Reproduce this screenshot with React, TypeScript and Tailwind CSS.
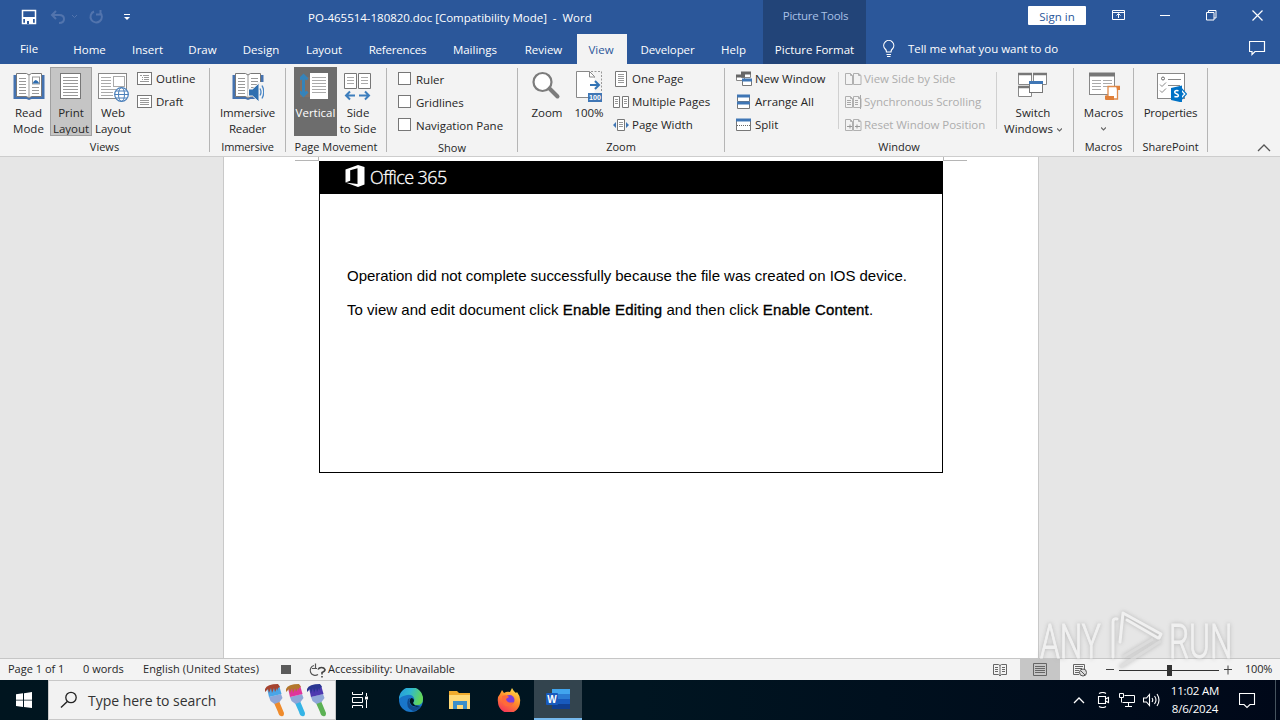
import type { ReactNode } from "react"
import clsx from "clsx"

const tabs = [
  { name: "File", size: "w-[58px] pb-0.5" },
  { name: "Home", size: "w-[63px]" },
  { name: "Insert", size: "w-[53px]" },
  { name: "Draw", size: "w-[57px]" },
  { name: "Design", size: "w-[60px]" },
  { name: "Layout", size: "w-[66px]" },
  { name: "References", size: "w-[81px] tracking-[-0.2px]" },
  { name: "Mailings", size: "w-[74px]" },
  { name: "Review", size: "w-[63px] mr-0.5" },
  { name: "View", size: "w-[50px] pr-0.5", active: true },
  { name: "Developer", size: "w-[81px] tracking-[-0.1px]" },
  { name: "Help", size: "w-[51px]" },
]

interface IconProps {
  w: number
  h: number
  className?: string
  children: ReactNode
}

function Icon({ w, h, className, children }: IconProps) {
  return (
    <svg width={w} height={h} viewBox={`0 0 ${w} ${h}`} fill="none" className={clsx("shrink-0", className)}>
      {children}
    </svg>
  )
}

function BookIcon({ reader }: { reader?: boolean }) {
  return (
    <Icon w={32} h={32}>
      <path d="M.5 5h31v24H18.500L16 30l-2.500-1H.5z" fill="#4472b0" />
      <path d="M3.500 3.500h10l2.500 1.500 2.500-1.500h10v23h-10L16 28l-2.500-1.500h-10z" fill="#fff" stroke="#777" />
      <path d="M16 5v23M6 8.500h7M6 11.500h7M6 14.500h7M6 17.500h7M6 20.500h7M6 23.500h7M19 17.500h7M19 20.500h7M19 23.500h7" stroke="#999" />
      {reader ? (
        <>
          <path d="M19 8.500h7M19 11.500h7M19 14.500h7" stroke="#999" />
          <path d="M25 12h7v20h-7z" fill="#f3f3f3" />
          <path d="M16.500 19h4l6.500-6v19l-6.500-6h-4z" fill="#2f6fb0" stroke="#f3f3f3" />
          <path d="M28 18.500q2 3.500 0 7M30 15.500q3.500 6.500 0 13" stroke="#4a86c5" strokeWidth="1.300" />
        </>
      ) : (
        <>
          <rect x="19.500" y="7" width="7" height="7" fill="#fff" stroke="#999" />
          <path d="M19.500 13.500q3-7 7 0z" fill="#2b6cb0" />
        </>
      )}
    </Icon>
  )
}

function PageIcon() {
  return (
    <Icon w={32} h={32}>
      <rect x="5.500" y="3.500" width="20" height="25" fill="#fff" stroke="#777" />
      <path d="M8 7.500h15M8 10.500h15M8 13.500h15M8 16.500h15M8 19.500h15M8 22.500h15M8 25.500h15" stroke="#999" />
    </Icon>
  )
}

function WebIcon() {
  return (
    <Icon w={32} h={32}>
      <rect x="1.500" y="3.500" width="28" height="25" fill="#fff" stroke="#888" />
      <path d="M4 7.500h10M4 10.500h10M4 13.500h10M4 16.500h10M4 19.500h15M4 22.500h12M4 25.500h12" stroke="#aaa" />
      <rect x="16.500" y="6.500" width="11" height="10" fill="#fff" stroke="#aaa" />
      <circle cx="24.500" cy="24.500" r="6.800" fill="#fff" stroke="#4a7fba" strokeWidth="1.200" />
      <ellipse cx="24.500" cy="24.500" rx="3" ry="6.800" stroke="#4a7fba" />
      <path d="M17.500 24.500h14M19 21h11M19 28h11" stroke="#4a7fba" />
    </Icon>
  )
}

function VerticalIcon() {
  return (
    <Icon w={32} h={32}>
      <path d="M-2 7h12v20H-2z" fill="#94735f" opacity=".5" />
      <path d="M3.500 5v20M-.5 9.500l4-4 4 4M-.5 21.500l4 4 4-4" stroke="#3583ba" strokeWidth="3" />
      <rect x="10" y="3" width="18" height="26" fill="#fff" />
      <path d="M12 7.500h14M12 10.500h14M12 13.500h14M12 16.500h14M12 19.500h14M12 22.500h14" stroke="#aaa" />
    </Icon>
  )
}

function SideIcon() {
  return (
    <Icon w={32} h={32}>
      <path d="M2.500 3.500h12v15h-12zM16.500 3.500h12v15h-12z" fill="#fff" stroke="#777" />
      <path d="M5 7.500h7M5 10.500h7M5 13.500h7M19 7.500h7M19 10.500h7M19 13.500h7" stroke="#aaa" />
      <path d="M4 25.500h9M8 21.500l-4 4 4 4M17 25.500h10M23 21.500l4 4-4 4" stroke="#3d7ebd" strokeWidth="2" />
    </Icon>
  )
}

function ZoomIcon() {
  return (
    <Icon w={32} h={32}>
      <circle cx="11.500" cy="12" r="9" fill="#fff" stroke="#7c7c7c" strokeWidth="2.200" />
      <path d="M18.500 18.500l8 8" stroke="#7c7c7c" strokeWidth="4" strokeLinecap="round" />
    </Icon>
  )
}

function HundredIcon() {
  return (
    <Icon w={32} h={32}>
      <path d="M3.500 1.500h13l5 5v21h-18z" fill="#fff" />
      <path d="M15 27.500H3.500v-26h13l5 5v1M16.500 1.500v5.500h5" stroke="#888" />
      <path d="M18 1.500h10.500v20" stroke="#999" strokeDasharray="2 1.500" />
      <path d="M17 15h9M22 11l4 4-4 4" stroke="#3274b5" strokeWidth="2" />
      <rect x="15" y="23" width="14" height="9" fill="#3f76b5" />
      <text x="16" y="30.300" fill="#fff" fontSize="7.200" fontWeight="700" fontFamily="Liberation Sans, sans-serif">
        100
      </text>
    </Icon>
  )
}

function SwitchIcon() {
  return (
    <Icon w={32} h={32}>
      <path d="M1.500 3.500h13v11h-13zM16.500 3.500h13v11h-13zM1.500 16.500h13v10h-13z" fill="#fff" stroke="#888" />
      <path d="M1 4h14M16 4h14M1 17h14" stroke="#777" strokeWidth="2.500" />
      <rect x="12.500" y="12.500" width="13" height="10" fill="#fff" stroke="#777" />
      <path d="M12 12.500h14" stroke="#3f76b5" strokeWidth="3" />
    </Icon>
  )
}

function MacrosIcon() {
  return (
    <Icon w={32} h={32}>
      <rect x="1.500" y="3.500" width="25" height="21" fill="#fff" stroke="#888" />
      <path d="M1 4.500h26" stroke="#777" strokeWidth="4" />
      <path d="M4 10.500h9M15 10.500h9M4 13.500h9M15 13.500h9M4 16.500h9M15 16.500h9M4 19.500h9" stroke="#aaa" />
      <path d="M20 16.500h11l-1.500 3v9.500H18v-3h2z" fill="#fff" stroke="#e08a4a" strokeWidth="1.300" />
      <path d="M17 26h9v4h-8q-1.500-1-1-4zM28 16h4v4h-3z" fill="#e07f38" />
    </Icon>
  )
}

function SharePointIcon() {
  return (
    <Icon w={32} h={32}>
      <rect x="2.500" y="3.500" width="27" height="25" fill="#fff" stroke="#888" />
      <circle cx="8" cy="8.500" r="1.500" stroke="#666" />
      <path d="M13 9.500h13M13 15.500h12M5 14.500l2 2 4-4M5 20.500l2 2 4-4" stroke="#888" />
      <path d="M26 18l5.500 6-5.500 6v-4l2-2-2-2z" fill="#fff" stroke="#0072c6" strokeWidth="1.200" />
      <path d="M16 18l11-2.500v17L16 30z" fill="#0072c6" />
      <path d="M23.500 20.800q-3.800-.8-3.800 1.200 0 1.300 1.800 1.800t1.900 1.800q0 1.900-4 .9" stroke="#fff" strokeWidth="1.500" />
    </Icon>
  )
}

interface BigButtonProps {
  icon: ReactNode
  lines: string[]
  className?: string
  arrow?: "inline" | "below"
}

function Caret() {
  return (
    <Icon w={5} h={4} className="mt-px ml-1">
      <path d="M0 .5l2.500 2.500L5 .5" stroke="#666" strokeWidth="1.200" />
    </Icon>
  )
}

function BigButton({ icon, lines, className, arrow }: BigButtonProps) {
  return (
    <div className={clsx("mt-[3px] flex h-[69px] shrink-0 flex-col items-center pt-[3px]", className)}>
      {icon}
      <div className="mt-[3px] flex flex-col items-center leading-4">
        {lines.map((line, i) => (
          <span key={line} className="flex h-4 items-center">
            {line}
            {arrow === "inline" && i === 1 && <Caret />}
          </span>
        ))}
        {arrow === "below" && (
          <span className="mt-[5px] mr-1">
            <Caret />
          </span>
        )}
      </div>
    </div>
  )
}

interface RowProps {
  icon: ReactNode
  children: ReactNode
  disabled?: boolean
}

function Row({ icon, children, disabled }: RowProps) {
  return (
    <div className={clsx("flex h-[23px] items-center", disabled ? "gap-0.5 tracking-[-0.05px] text-[#adadad]" : "gap-[3px]")}>
      {icon}
      <span>{children}</span>
    </div>
  )
}

interface GroupProps {
  label: string
  className: string
  children: ReactNode
}

function Group({ label, className, children }: GroupProps) {
  return (
    <>
      <section className={clsx("flex shrink-0 flex-col", className)}>
        <div className="flex h-[75px]">{children}</div>
        <div className="pt-0.5 text-center text-[11px] leading-[18px]">{label}</div>
      </section>
      <div className="mt-1 h-[84px] w-px shrink-0 bg-[#b5b5b5]" />
    </>
  )
}

function SmallPage({ outline }: { outline?: boolean }) {
  return (
    <Icon w={16} h={16}>
      <rect x=".5" y="1.500" width="14" height="12" fill="#fff" stroke="#777" />
      <path
        d={outline ? "M3 4.500h2M6 4.500h6M5 6.500h1M7 6.500h5M5 8.500h1M7 8.500h5M3 10.500h9" : "M3 4.500h9M3 6.500h9M3 8.500h9M3 10.500h9"}
        stroke="#999"
      />
    </Icon>
  )
}

function CompareIcon({ kind }: { kind: "side" | "sync" | "reset" }) {
  return (
    <Icon w={17} h={16}>
      <path d="M.5 2.500h5l2 2v9h-7zM8.500 2.500h5l2.500 2v9H8.500z" stroke="#b0b0b0" />
      <path d="M5.500 2.500v2h2M13.500 2.500v2h2" stroke="#b0b0b0" />
      {kind === "sync" && <path d="M2 6.500h4M2 8.500h4M2 10.500h4M10 6.500h3M10 8.500h3M10 10.500h3M15.500 1v14" stroke="#a8a8a8" />}
      {kind === "reset" && <path d="M2 9.500h5M5 7.500v4M10 9.500h5M12 7.500v4" stroke="#999" />}
    </Icon>
  )
}

function Header() {
  return (
    <header className="flex h-16 bg-[#2b579a] text-white">
      <div className="flex w-[763px] flex-col">
        <div className="flex h-[34px] items-center">
          <Icon w={16} h={16} className="ml-[21px]">
            <path d="M1.500 1.500h13v13h-13z" stroke="#fff" strokeWidth="1.500" />
            <path d="M2 8h12v2H2zM4 10h8v5H4z" fill="#fff" />
            <path d="M6 12h2v3H6z" fill="#2b579a" />
          </Icon>
          <Icon w={28} h={16} className="ml-[13px]">
            <path d="M2 6h7q5 0 5 4t-5 4M6 2L2 6l4 4" stroke="#5274ad" strokeWidth="2" />
            <path d="M22 6l2.500 2.500L27 6" stroke="#5274ad" />
          </Icon>
          <Icon w={16} h={16} className="ml-2.5">
            <path d="M12 3.500a5.700 5.700 0 1 1-6-1M12.500 1v4.500H8" stroke="#5274ad" strokeWidth="2" />
          </Icon>
          <Icon w={8} h={8} className="ml-[19px]">
            <path d="M1 1.500h6" stroke="#fff" />
            <path d="M1 4h6L4 7z" fill="#fff" />
          </Icon>
          <span className="mt-px ml-[177px] text-[11.5px] tracking-[-0.02px] whitespace-pre">
            PO-465514-180820.doc [Compatibility Mode]  -  Word
          </span>
        </div>
        <nav className="flex h-[30px]">
          {tabs.map((tab) => (
            <div
              key={tab.name}
              className={clsx(
                "flex shrink-0 items-center justify-center pt-px",
                tab.size,
                tab.active && "bg-[#f3f3f3] text-[#2b579a]"
              )}
            >
              {tab.name}
            </div>
          ))}
        </nav>
      </div>
      <div className="flex w-[103px] flex-col bg-[#224478] text-center">
        <div className="h-[34px] pl-0.5 leading-[32px] tracking-[-0.3px] text-[#a9c1e6]">Picture Tools</div>
        <div className="h-[30px] leading-[31px]">Picture Format</div>
      </div>
      <div className="flex grow flex-col">
        <div className="flex h-[34px] items-center">
          <div className="mb-[3px] ml-[162px] h-[19px] w-[58px] rounded-[1px] bg-white text-center leading-[21px] text-[#2b579a]">
            Sign in
          </div>
          <Icon w={14} h={12} className="mb-1 ml-[26px]">
            <path d="M.5 1.500h12v9H.5zM.5 3.500h12M6.500 9V5M4.500 6.500l2-2 2 2" stroke="#fff" />
          </Icon>
          <Icon w={10} h={10} className="mb-1 ml-[34px]">
            <path d="M0 5.500h10" stroke="#fff" />
          </Icon>
          <Icon w={11} h={11} className="mb-1 ml-9">
            <path d="M.5 2.500h7.500v7.500H.5zM2.500 2.500V.5H10v7.500H8" stroke="#fff" />
          </Icon>
          <Icon w={11} h={11} className="mb-1 ml-[35px]">
            <path d="M.5.5l10 10M10.500.5l-10 10" stroke="#fff" strokeWidth="1.200" />
          </Icon>
        </div>
        <div className="flex h-[30px] items-center">
          <Icon w={14} h={18} className="ml-4">
            <path d="M4.500 12q0-2-1.500-3.200a5 5 0 1 1 7.500 0Q9 10 9 12zM4.500 14.500H9M5 16.500h3.500" stroke="#fff" strokeWidth="1.200" />
          </Icon>
          <span className="ml-3 tracking-[-0.04px]">Tell me what you want to do</span>
          <Icon w={17} h={16} className="mr-[14px] mb-0.5 ml-auto">
            <path d="M.5 1.500h15v10H6l-3 3v-3H.5z" stroke="#fff" strokeWidth="1.200" />
          </Icon>
        </div>
      </div>
    </header>
  )
}

function Ribbon() {
  return (
    <div className="flex h-[93px] border-b border-[#cdcdcd] bg-[#f3f3f3]">
      <Group label="Views" className="w-[209px]">
        <BigButton icon={<BookIcon />} lines={["Read", "Mode"]} className="ml-[7px] w-[43px]" />
        <BigButton
          icon={<PageIcon />}
          lines={["Print", "Layout"]}
          className="w-[42px] bg-[#c5c5c5] outline outline-1 -outline-offset-1 outline-[#a0a0a0]"
        />
        <BigButton icon={<WebIcon />} lines={["Web", "Layout"]} className="w-[42px]" />
        <div className="mt-[3px] ml-[3px] flex flex-col">
          <Row icon={<SmallPage outline />}>Outline</Row>
          <Row icon={<SmallPage />}>Draft</Row>
        </div>
      </Group>
      <Group label="Immersive" className="w-[75px] tracking-[-0.15px]">
        <BigButton icon={<BookIcon reader />} lines={["Immersive", "Reader"]} className="w-[75px]" />
      </Group>
      <Group label="Page Movement" className="w-[100px]">
        <BigButton icon={<VerticalIcon />} lines={["Vertical"]} className="ml-2 w-[43px] bg-[#6d6d6d] text-white" />
        <BigButton icon={<SideIcon />} lines={["Side", "to Side"]} className="w-[42px]" />
      </Group>
      <Group label="Show" className="w-[130px]">
        <div className="mt-1 ml-[11px] flex flex-col">
          {["Ruler", "Gridlines", "Navigation Pane"].map((name) => (
            <div key={name} className="flex h-[23px] items-center gap-[5px]">
              <span className="mb-0.5 h-[13px] w-[13px] border border-[#777] bg-white" />
              {name}
            </div>
          ))}
        </div>
      </Group>
      <Group label="Zoom" className="w-[206px]">
        <BigButton icon={<ZoomIcon />} lines={["Zoom"]} className="ml-2 w-[42px]" />
        <BigButton icon={<HundredIcon />} lines={["100%"]} className="w-[42px]" />
        <div className="mt-[3px] ml-[3px] flex flex-col">
          <Row
            icon={
              <Icon w={16} h={16}>
                <path d="M2.500.5h11v15h-11z" fill="#fff" stroke="#777" />
                <path d="M5 3.500h6M5 5.500h6M5 7.500h6M5 9.500h6M5 11.500h6" stroke="#999" />
              </Icon>
            }
          >
            One Page
          </Row>
          <Row
            icon={
              <Icon w={16} h={16}>
                <path d="M.5 2.500h6v11h-6zM9.500 2.500h6v11h-6z" fill="#fff" stroke="#777" />
                <path d="M2 5.500h3M2 7.500h3M2 9.500h3M11 5.500h3M11 7.500h3M11 9.500h3" stroke="#999" />
              </Icon>
            }
          >
            Multiple Pages
          </Row>
          <Row
            icon={
              <Icon w={16} h={16}>
                <path d="M4.500 2.500h7v11h-7z" fill="#fff" stroke="#777" />
                <path d="M6 5.500h4M6 7.500h4M6 9.500h4" stroke="#999" />
                <path d="M3 5v6L0 8zM13 5v6l3-3z" fill="#3f76b5" />
              </Icon>
            }
          >
            Page Width
          </Row>
        </div>
      </Group>
      <Group label="Window" className="w-[348px]">
        <div className="mt-[3px] ml-[11px] flex w-[102px] flex-col">
          <Row
            icon={
              <Icon w={16} h={16}>
                <path d="M5.500 1.500h9v5h-9zM.5 4.500h8v5h-8z" fill="#fff" stroke="#888" />
                <path d="M5 2h10M0 5h9" stroke="#666" strokeWidth="3" />
                <path d="M6.500 8.500h9v6h-9z" fill="#fff" stroke="#777" />
                <path d="M6 9h10" stroke="#3f76b5" strokeWidth="3" />
              </Icon>
            }
          >
            New Window
          </Row>
          <Row
            icon={
              <Icon w={16} h={16}>
                <path d="M1.500 1.500h12v6h-12zM1.500 8.500h12v6h-12z" fill="#fff" stroke="#777" />
                <path d="M1 2h13M1 9h13" stroke="#3f76b5" strokeWidth="3" />
              </Icon>
            }
          >
            Arrange All
          </Row>
          <Row
            icon={
              <Icon w={16} h={16}>
                <path d="M.5 2.500h14v11H.5z" fill="#fff" stroke="#777" />
                <path d="M0 3h15" stroke="#3f76b5" strokeWidth="3" />
                <path d="M1 8.500h13" stroke="#666" strokeDasharray="1 1" />
              </Icon>
            }
          >
            Split
          </Row>
        </div>
        <div className="mt-2 h-[57px] w-px bg-[#d0d0d0]" />
        <div className="mt-[3px] ml-1.5 flex w-[151px] flex-col whitespace-nowrap">
          <Row disabled icon={<CompareIcon kind="side" />}>View Side by Side</Row>
          <Row disabled icon={<CompareIcon kind="sync" />}>Synchronous Scrolling</Row>
          <Row disabled icon={<CompareIcon kind="reset" />}>Reset Window Position</Row>
        </div>
        <div className="mt-2 h-[57px] w-px bg-[#d0d0d0]" />
        <BigButton icon={<SwitchIcon />} lines={["Switch", "Windows"]} arrow="inline" className="ml-1 w-[64px]" />
      </Group>
      <Group label="Macros" className="w-[59px]">
        <BigButton icon={<MacrosIcon />} lines={["Macros"]} arrow="below" className="w-[59px]" />
      </Group>
      <Group label="SharePoint" className="w-[73px]">
        <BigButton icon={<SharePointIcon />} lines={["Properties"]} className="w-[73px] tracking-[-0.2px]" />
      </Group>
      <Icon w={14} h={8} className="mt-20 mr-[9px] ml-auto">
        <path d="M1 7l6-6 6 6" stroke="#555" strokeWidth="1.300" />
      </Icon>
    </div>
  )
}

function CropMark({ flip }: { flip?: boolean }) {
  return <div className={clsx("h-1 w-6 border-b border-[#b5b5b5]", flip ? "border-l" : "border-r")} />
}

function Strong({ children }: { children: ReactNode }) {
  return <strong className="font-normal tracking-[0.2px] [-webkit-text-stroke:0.35px_black]">{children}</strong>
}

function Document() {
  return (
    <main className="flex h-[501px] justify-center bg-[#e6e6e6] pr-[18px]">
      <div className="w-[816px] shrink-0 border-x border-[#c9c9c9] bg-white pl-[71px]">
        <div className="flex">
          <CropMark />
          <div className="w-[624px]" />
          <CropMark flip />
        </div>
        <div className="ml-6 h-[312px] w-[624px] border border-t-0 border-black font-['Liberation_Sans',sans-serif] text-[15px] leading-[34px] text-black">
          <div className="flex h-[33px] items-center bg-black pb-[3px] pl-[25px] text-white">
            <Icon w={20} h={24}>
              <path d="M.5 5.500L13 1l6.500 2v17.500L13 23 .5 18.500l12 1.600V4.300L5.200 6.200v10.500L.5 18.500z" fill="#fff" />
            </Icon>
            <span className="mt-0.5 ml-[5px] font-['Open_Sans',sans-serif] text-[18px] leading-8 font-light tracking-[-0.6px] [-webkit-text-stroke:0.3px_white]">
              Office 365
            </span>
          </div>
          <div className="pt-[65px] pl-[27px] whitespace-nowrap">
            <p className="tracking-[-0.025px]">
              Operation did not complete successfully because the file was created on IOS device.
            </p>
            <p className="tracking-[0.02px]">
              To view and edit document click <Strong>Enable Editing</Strong> and then click <Strong>Enable Content</Strong>.
            </p>
          </div>
        </div>
      </div>
    </main>
  )
}

function StatusBar() {
  return (
    <div className="flex h-[22px] items-center border-t border-[#c6c6c6] bg-[#f3f3f3] text-[11px]">
      <span className="ml-2 w-[75px]">Page 1 of 1</span>
      <span className="w-[60px]">0 words</span>
      <span className="w-[138px] tracking-[0.07px]">English (United States)</span>
      <span className="h-[9px] w-[10px] bg-[#5a5a5a]" />
      <Icon w={18} h={16} className="ml-[18px]">
        <path d="M5 3.500a5 5 0 1 0 4 9M3 6.500h5M6.500 1.500v5" stroke="#555" strokeWidth="1.200" />
        <path d="M9 7.500q1-2 3.500-2T16 7.500q0 2-3 3v2M13 14v1.500" stroke="#444" strokeWidth="1.600" />
      </Icon>
      <span className="ml-px">Accessibility: Unavailable</span>
      <div className="ml-auto flex h-full items-center">
        <Icon w={14} h={14}>
          <path
            d="M.5 1.500h5l1.500 1 1.500-1h5v10h-5L7 13l-1.500-1.500h-5zM7 2v11M2 4.500h3M2 6.500h3M2 8.500h3M9 4.500h3M9 6.500h3M9 8.500h3"
            stroke="#666"
          />
        </Icon>
        <div className="ml-[13px] flex h-full w-10 items-center justify-center bg-[#c6c6c6]">
          <Icon w={14} h={13}>
            <path d="M.5.5h13v12H.5zM2 3.500h10M2 5.500h10M2 7.500h10M2 9.500h10" stroke="#666" />
          </Icon>
        </div>
        <Icon w={14} h={14} className="ml-[13px]">
          <path d="M6 11.500H.5v-10h11V6M2 3.500h8M2 5.500h7M2 7.500h4M2 9.500h4" stroke="#666" />
          <circle cx="10" cy="9.500" r="3.500" fill="#ddd" stroke="#555" />
          <path d="M8 8l4 4" stroke="#555" />
        </Icon>
        <Icon w={126} h={12} className="ml-[19px]">
          <path d="M0 5.500h8M122 1.500v9M118 5.500h8" stroke="#444" />
          <path d="M13 6.500h100" stroke="#333" />
          <rect x="61" y="1" width="5" height="11" fill="#333" />
        </Icon>
        <span className="mr-[7px] ml-[13px] w-[28px] tracking-[-0.2px]">100%</span>
      </div>
    </div>
  )
}

interface BrushProps {
  head: string
  paint: string
  handle: string
}

function Brush({ head, paint, handle }: BrushProps) {
  return (
    <Icon w={21} h={34}>
      <path d="M9 20l5-2 5 12q0 4-3 3-2 0-3-4z" fill={handle} />
      <path d="M4 14l12-3 1.500 4-3 4-5 2-4-3z" fill="#8fa6d8" />
      <path d="M2 5q7-3 12-3l2.500 9L4 14z" fill={head} />
      <path d="M0 6Q2 1 13 1l2 3-2 1v3l-1-3-2 4-1-4-2 5-1-5-2 5-1-4-3 3z" fill={paint} />
    </Icon>
  )
}

function Taskbar() {
  return (
    <div className="flex h-10 items-center bg-linear-to-r from-[#00151f] via-[#001521] to-[#000819] text-white">
      <div className="flex w-12 justify-center">
        <Icon w={16} h={16}>
          <path d="M0 2.300L7 1.300v6.400H0zM8 1.200L16 0v7.700H8zM0 8.500h7v6.400l-7-1zM8 8.500h8V16l-8-1.100z" fill="#fff" />
        </Icon>
      </div>
      <div className="flex h-10 w-[288px] items-center border border-[#c8c8c8] bg-[#f2f2f2] text-[#333]">
        <Icon w={18} h={18} className="ml-[11px]">
          <circle cx="11" cy="6.500" r="5.200" stroke="#222" strokeWidth="1.300" />
          <path d="M7.300 10.500L1 16.500" stroke="#222" strokeWidth="1.400" />
        </Icon>
        <span className="mt-px ml-2.5 text-[14px] tracking-[-0.03px]">Type here to search</span>
        <div className="mr-[7px] ml-auto flex">
          <Brush head="#4aa5e8" paint="#a5432f" handle="#ef8b2c" />
          <Brush head="#e0359c" paint="#b3772c" handle="#35b4e6" />
          <Brush head="#4d39b0" paint="#2a3691" handle="#5cb154" />
        </div>
      </div>
      <div className="flex w-[47px] justify-center">
        <Icon w={17} h={16}>
          <path d="M1.500 0v2.500h10V0M1.500 16v-2.500h10V16M1.500 5.500h10v5h-10zM15.500 1v3M15.500 8v8" stroke="#fff" />
          <path d="M14 4.500h3v3h-3z" fill="#fff" />
        </Icon>
      </div>
      <div className="flex w-[55px] justify-center">
        <Icon w={24} h={24}>
          <defs>
            <linearGradient id="edge" x1="0" y1="0" x2="1" y2="0.300">
              <stop offset="0" stopColor="#2497dc" />
              <stop offset="0.500" stopColor="#2fb8d0" />
              <stop offset="1" stopColor="#62d65a" />
            </linearGradient>
          </defs>
          <circle cx="12" cy="12" r="12" fill="#1976c9" />
          <path d="M0 11A12 12 0 0 1 24 11q0 6-6 6-4 0-4-2 2-2 1-5-2-4-7-3-6 1-8 4z" fill="url(#edge)" />
          <path d="M9 11q-3 9 5 12 5 0 8-5-5 2-9 0-4-3-2-8z" fill="#114a8c" />
          <path d="M12 10q3 0 3 3l-1 2 2 2.500 5 .5q-4 1.500-8-.5-4-4-1-7.500z" fill="#00151f" />
        </Icon>
      </div>
      <div className="flex w-[44px] justify-center">
        <Icon w={22} h={20}>
          <path d="M0 1h8l2 2h11v15H0z" fill="#f0ab2d" />
          <path d="M0 5h21v14H0z" fill="#ffd977" />
          <path d="M4 11h14v8h-4v-4H8v4H4z" fill="#3b8fc9" />
        </Icon>
      </div>
      <div className="flex w-[52px] justify-center pl-px">
        <Icon w={24} h={24}>
          <defs>
            <linearGradient id="fox" x1="0.800" y1="0" x2="0.300" y2="1">
              <stop offset="0" stopColor="#ffe14a" />
              <stop offset="0.500" stopColor="#ff8a2a" />
              <stop offset="1" stopColor="#f5325c" />
            </linearGradient>
          </defs>
          <path d="M3 6l2-4 2 3q3-2 6-1l2-4q2 4 4 5l1-1q4 5 3 10a11 11 0 0 1-22 0Q0 9 3 6z" fill="url(#fox)" />
          <circle cx="12.500" cy="12" r="5" fill="#7b3ddb" />
          <path d="M5 8q5-2 7 1l-3 2q1 5 8 3-3 5-8 4-5-2-4-10z" fill="#ff6a39" />
        </Icon>
      </div>
      <div className="flex h-10 w-12 items-center justify-center border-b-2 border-[#76b9ed] bg-[#33444e]">
        <Icon w={24} h={22}>
          <path d="M6 1h18v5H6z" fill="#41a5ee" />
          <path d="M6 6h18v5H6z" fill="#2b7cd3" />
          <path d="M6 11h18v5H6z" fill="#185abd" />
          <path d="M6 16h18v5H6z" fill="#103f91" />
          <rect y="5" width="12" height="12" rx="1" fill="#185abd" />
          <text x="1.300" y="14.500" fill="#fff" fontSize="10" fontWeight="700" fontFamily="Liberation Sans, sans-serif">
            W
          </text>
        </Icon>
      </div>
      <Icon w={12} h={8} className="ml-auto">
        <path d="M1 7l5-5 5 5" stroke="#fff" strokeWidth="1.300" />
      </Icon>
      <Icon w={14} h={16} className="ml-3">
        <path d="M1.500 4.500h7v7h-7zM8.500 7l3-1.500v5L8.500 9M2 1.500q4-2 7 0M2 14.500q4 2 7 0" stroke="#fff" strokeWidth="1.100" />
      </Icon>
      <Icon w={17} h={16} className="ml-2">
        <path d="M5.500 3.500h10v7h-12M9.500 11v3M6 14.500h7M.5 1.500h4v4h-4zM2.500 5.500v5" stroke="#fff" />
      </Icon>
      <Icon w={18} h={14} className="ml-[7px]">
        <path d="M.5 5h3l3-3.500v11L3.500 9h-3zM9 5q1.500 2 0 4M11.500 3q3 4 0 8M14 1q4 6 0 12" stroke="#fff" strokeWidth="1.100" />
      </Icon>
      <div className="ml-[7px] w-[54px] text-center text-[11.5px] leading-[18px] tracking-[-0.2px] whitespace-nowrap">
        11:02 AM
        <br />
        8/6/2024
      </div>
      <Icon w={17} h={17} className="mr-[19px] ml-[17px]">
        <path d="M.5 1.500h15v11h-4.500l-3 3-3-3H.5z" stroke="#fff" strokeWidth="1.100" />
      </Icon>
      <div className="h-10 w-px bg-[#46535e]" />
      <div className="w-1" />
    </div>
  )
}

function Watermark() {
  return (
    <div className="pointer-events-none absolute top-[608px] left-[1036px] h-16 w-[204px] opacity-75 [filter:drop-shadow(0_0_2px_#a5a5a5)]">
      <svg width="204" height="64" viewBox="-3 0 204 64" fill="none">
        <path d="M81 59l41-26M84 49l30-18" stroke="#d8d8d8" strokeWidth="3" />
        <g stroke="#f4f4f4" strokeWidth="3" strokeLinejoin="round" strokeLinecap="round">
          <path d="M81 34l3-29 38 21-2 4M88 12l31 18" />
          <path d="M78 11q-4-1-4 3v35" />
        </g>
        <g fontFamily="Roboto, sans-serif" fontSize="48" fontWeight="300" fill="#f4f4f4" stroke="#f4f4f4" strokeWidth="1">
          <text transform="translate(1 50) scale(.66 1)">ANY</text>
          <text transform="translate(130 50) scale(.66 1)">RUN</text>
        </g>
      </svg>
    </div>
  )
}

export default function App() {
  return (
    <div className="relative h-[720px] w-[1280px] overflow-hidden bg-white font-['Open_Sans',sans-serif] text-[11.5px] text-[#262626]">
      <Header />
      <Ribbon />
      <Document />
      <StatusBar />
      <Taskbar />
      <Watermark />
    </div>
  )
}
